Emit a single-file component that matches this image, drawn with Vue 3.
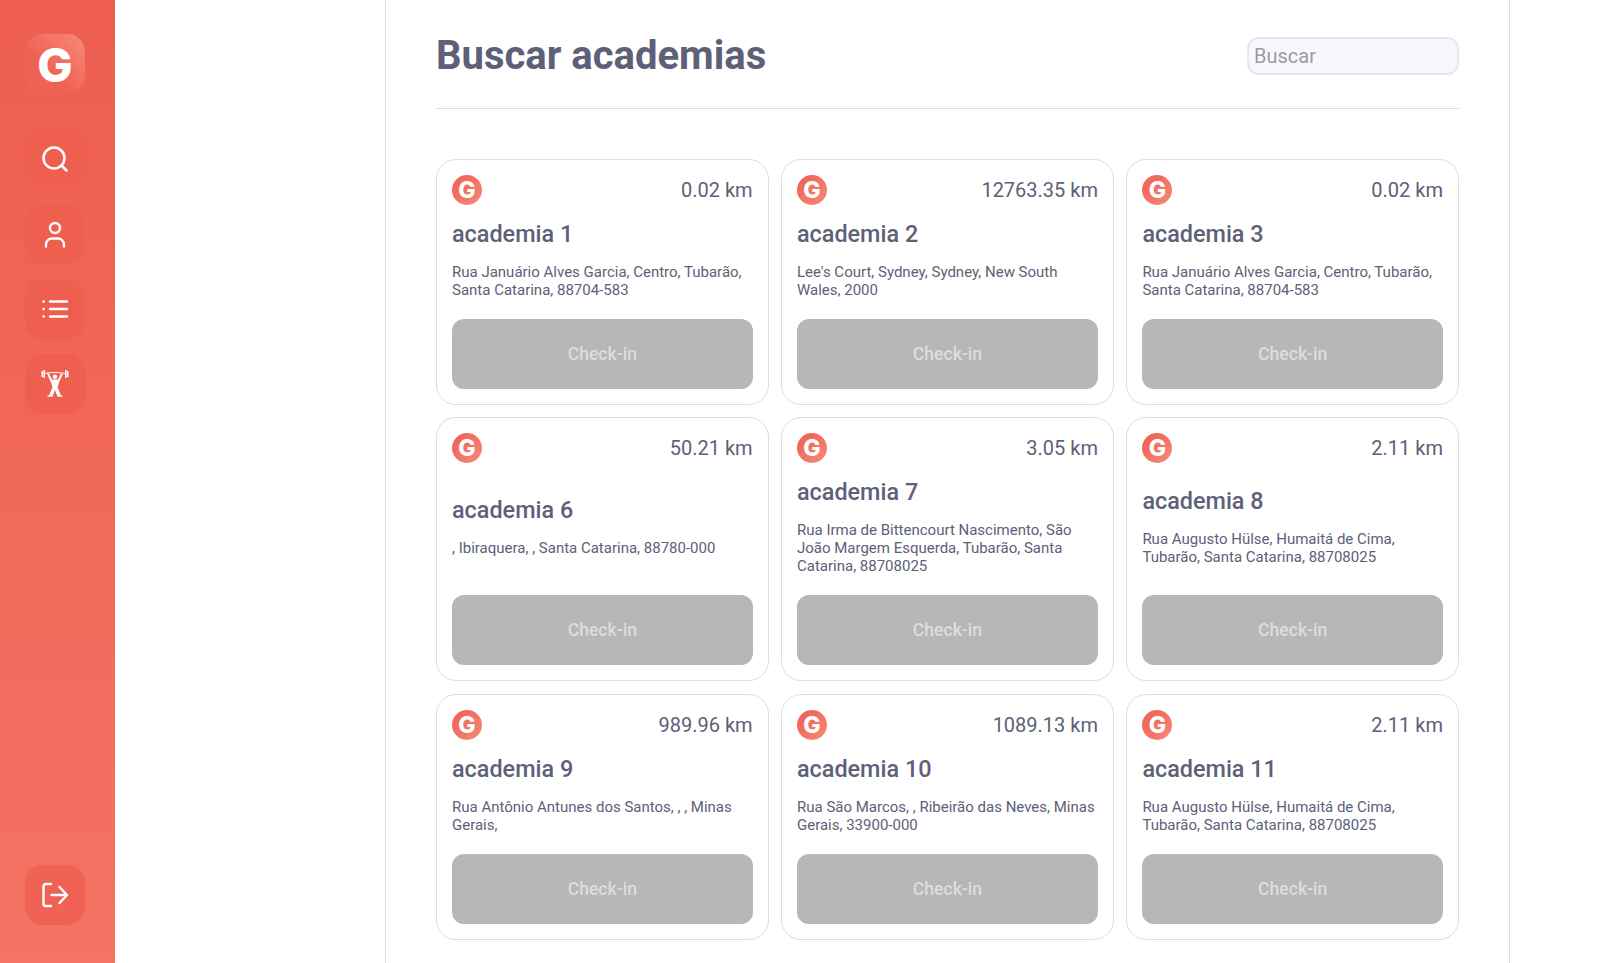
<template>
  <div class="page">
    <aside class="sidebar">
      <div class="nav-top">
        <div class="logo">G</div>
        <button class="nav-btn" aria-label="Buscar">
          <svg viewBox="0 0 28 28" width="28" height="28" fill="none" stroke="#fff" stroke-width="2.5" stroke-linecap="round">
            <circle cx="13" cy="13" r="10.5" />
            <path d="M21 21l4.500 4.500" />
          </svg>
        </button>
        <button class="nav-btn" aria-label="Perfil">
          <svg viewBox="0 0 28 28" width="28" height="28" fill="none" stroke="#fff" stroke-width="2.400" stroke-linecap="round" stroke-linejoin="round">
            <circle cx="14" cy="8" r="5" />
            <path d="M5 26.500v-2a6 6 0 0 1 6-6h6a6 6 0 0 1 6 6v2" />
          </svg>
        </button>
        <button class="nav-btn" aria-label="Lista">
          <svg viewBox="0 0 28 28" width="28" height="28" fill="none" stroke="#fff" stroke-width="2.400" stroke-linecap="round">
            <path d="M9 6.500h17M9 14h17M9 21.500h17M2.500 6.500h.3M2.500 14h.3M2.500 21.500h.3" />
          </svg>
        </button>
        <button class="nav-btn" aria-label="Academias">
          <svg viewBox="0 0 30 30" width="30" height="30" fill="#fff">
            <circle cx="15" cy="7.700" r="2.200" />
            <path d="M7 4.500h2L12 10.500h6L21 4.500h2L19 13.500l-1.500 4.500 3.500 8.500h1.500v1.200h-5L15 21l-2.500 6.700h-5v-1.200H9l3.500-8.500L11 13.500z" />
            <path d="M3 5c6-2 18-2 24 0" fill="none" stroke="#fff" stroke-width="1" />
            <rect x="1.500" y="2" width="1.500" height="6" />
            <rect x="3.500" y="1" width="1.500" height="8" />
            <rect x="25" y="1" width="1.500" height="8" />
            <rect x="27" y="2" width="1.500" height="6" />
          </svg>
        </button>
      </div>
      <button class="nav-btn nav-btn-exit" aria-label="Sair">
        <svg viewBox="0 0 28 28" width="28" height="28" fill="none" stroke="#fff" stroke-width="2.400" stroke-linecap="round" stroke-linejoin="round">
          <path d="M10 3H4.500a2 2 0 0 0-2 2v18a2 2 0 0 0 2 2H10M10.500 14H26M18.500 6l7.500 8-7.500 8" />
        </svg>
      </button>
    </aside>

    <main class="content">
      <header class="header">
        <h1 class="title">Buscar academias</h1>
        <input class="search" type="text" placeholder="Buscar" />
      </header>

      <section class="grid">
        <article v-for="gym in gyms" :key="gym.name" class="card">
          <div class="card-top">
            <span class="badge">G</span>
            <span class="distance">{{ gym.distance }}</span>
          </div>
          <div class="card-body">
            <h2 class="gym-name">{{ gym.name }}</h2>
            <p class="gym-address">{{ gym.address }}</p>
          </div>
          <button class="checkin" disabled>Check-in</button>
        </article>
      </section>
    </main>
  </div>
</template>

<script setup>
const gyms = [
  { name: 'academia 1', distance: '0.02 km', address: 'Rua Januário Alves Garcia, Centro, Tubarão, Santa Catarina, 88704-583' },
  { name: 'academia 2', distance: '12763.35 km', address: "Lee's Court, Sydney, Sydney, New South Wales, 2000" },
  { name: 'academia 3', distance: '0.02 km', address: 'Rua Januário Alves Garcia, Centro, Tubarão, Santa Catarina, 88704-583' },
  { name: 'academia 6', distance: '50.21 km', address: ', Ibiraquera, , Santa Catarina, 88780-000' },
  { name: 'academia 7', distance: '3.05 km', address: 'Rua Irma de Bittencourt Nascimento, São João Margem Esquerda, Tubarão, Santa Catarina, 88708025' },
  { name: 'academia 8', distance: '2.11 km', address: 'Rua Augusto Hülse, Humaitá de Cima, Tubarão, Santa Catarina, 88708025' },
  { name: 'academia 9', distance: '989.96 km', address: 'Rua Antônio Antunes dos Santos, , , Minas Gerais,' },
  { name: 'academia 10', distance: '1089.13 km', address: 'Rua São Marcos, , Ribeirão das Neves, Minas Gerais, 33900-000' },
  { name: 'academia 11', distance: '2.11 km', address: 'Rua Augusto Hülse, Humaitá de Cima, Tubarão, Santa Catarina, 88708025' }
]
</script>

<style scoped>
.page {
  display: flex;
  height: 963px;
  overflow: hidden;
  background: #fff;
  font-family: Roboto, "Liberation Sans", sans-serif;
  color: #5e6078;
}

.sidebar {
  flex-shrink: 0;
  width: 115px;
  box-sizing: border-box;
  padding: 34px 5px 38px 0;
  display: flex;
  flex-direction: column;
  align-items: center;
  justify-content: space-between;
  background: linear-gradient(180deg, #ed5e4f 0%, #f47363 100%);
}

.nav-top {
  display: flex;
  flex-direction: column;
  gap: 15px;
}

.logo {
  width: 60px;
  height: 60px;
  margin-bottom: 20px;
  border-radius: 18px;
  display: flex;
  align-items: center;
  justify-content: center;
  background: linear-gradient(45deg, #ef6354 40%, #f68a7b 100%);
  color: #fff;
  font-family: Inter, Roboto, sans-serif;
  font-size: 47px;
  font-weight: 800;
}

.nav-btn {
  width: 60px;
  height: 60px;
  padding: 0;
  border: none;
  border-radius: 18px;
  display: flex;
  align-items: center;
  justify-content: center;
  background: #ee5f50;
}

.nav-btn-exit {
  background: #f06253;
}

.content {
  width: 1125px;
  height: 963px;
  box-sizing: border-box;
  margin-left: 270px;
  padding: 0 50px;
  border-left: 1px solid #d3e2e5;
  border-right: 1px solid #d3e2e5;
}

.header {
  height: 109px;
  box-sizing: border-box;
  padding-top: 37px;
  display: flex;
  justify-content: space-between;
  align-items: flex-start;
  border-bottom: 1px solid #d3e2e5;
}

.title {
  margin: 0;
  font-size: 40px;
  font-weight: 700;
  line-height: 37px;
}

.search {
  width: 212px;
  height: 38px;
  box-sizing: border-box;
  padding: 0 5px;
  border: 2px solid #e6e6f0;
  border-radius: 12px;
  background: #f8f8fc;
  font-family: inherit;
  font-size: 20px;
  color: #5e6078;
}

.search::placeholder {
  color: #9c98a6;
}

.grid {
  margin-top: 50px;
  display: grid;
  grid-template-columns: 332.600px 333px 332.600px;
  grid-template-rows: 246px 263.400px 247px;
  gap: 12.400px;
}

.card {
  box-sizing: border-box;
  padding: 15px;
  display: flex;
  flex-direction: column;
  border: 1px solid #d3e2e5;
  border-radius: 20px;
}

.card:nth-child(n + 7) {
  margin-top: 1px;
}

.card-top {
  display: flex;
  justify-content: space-between;
  align-items: center;
}

.badge {
  width: 30px;
  height: 30px;
  border-radius: 50%;
  display: flex;
  align-items: center;
  justify-content: center;
  background: linear-gradient(135deg, #ed5e4f 0%, #f68a7b 100%);
  color: #fff;
  font-family: Inter, Roboto, sans-serif;
  font-size: 23px;
  font-weight: 800;
}

.distance {
  font-size: 20px;
}

.card-body {
  flex: 1;
  padding-bottom: 5px;
  display: flex;
  flex-direction: column;
  justify-content: center;
}

.gym-name {
  margin: 0;
  font-size: 23.400px;
  font-weight: 500;
  line-height: 28px;
}

.gym-address {
  margin: 15px 0 0;
  font-size: 15px;
  line-height: 18px;
}

.checkin {
  height: 70px;
  flex-shrink: 0;
  padding: 0;
  border: none;
  border-radius: 12px;
  background: #b7b7b7;
  color: #dddddd;
  font-family: inherit;
  font-size: 17.600px;
  font-weight: 500;
}
</style>
